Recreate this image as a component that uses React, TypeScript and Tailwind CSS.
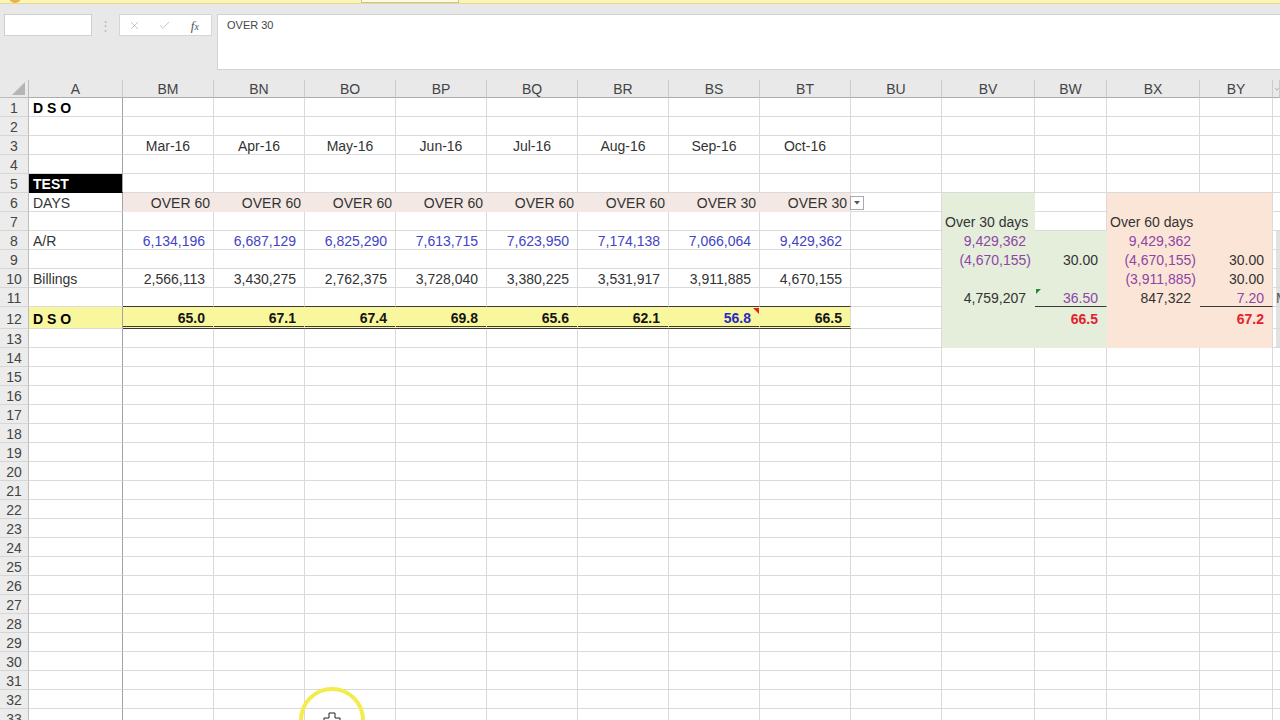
import clsx from 'clsx';
import { X, Check } from 'lucide-react';

type Col = { key: string; w: string };
type Cell = { t: string; a?: 'l' | 'l3' | 'r' | 'rp' | 'c'; c?: string };

const COLS: Col[] = [
  { key: 'A', w: 'w-[94px]' },
  { key: 'BM', w: 'w-[91px]' },
  { key: 'BN', w: 'w-[91px]' },
  { key: 'BO', w: 'w-[91px]' },
  { key: 'BP', w: 'w-[91px]' },
  { key: 'BQ', w: 'w-[91px]' },
  { key: 'BR', w: 'w-[91px]' },
  { key: 'BS', w: 'w-[91px]' },
  { key: 'BT', w: 'w-[91px]' },
  { key: 'BU', w: 'w-[91px]' },
  { key: 'BV', w: 'w-[93px]' },
  { key: 'BW', w: 'w-[72px]' },
  { key: 'BX', w: 'w-[93px]' },
  { key: 'BY', w: 'w-[73px]' },
  { key: 'Z', w: 'w-[7px]' },
];

const MAIN = ['BM', 'BN', 'BO', 'BP', 'BQ', 'BR', 'BS', 'BT'];
const ROWS = Array.from({ length: 33 }, (_, i) => i + 1);

const BLUE = 'text-[#4343c6]';
const PURPLE = 'text-[#8d46a6]';
const RED = 'text-[#e2222c] font-bold';

const ALIGN = {
  l: 'justify-start pl-[4px]',
  l3: 'justify-start pl-[3px]',
  r: 'justify-end pr-[8px]',
  rp: 'justify-end pr-[3px]',
  c: 'justify-center',
};

const months = ['Mar-16', 'Apr-16', 'May-16', 'Jun-16', 'Jul-16', 'Aug-16', 'Sep-16', 'Oct-16'];
const days = ['OVER 60', 'OVER 60', 'OVER 60', 'OVER 60', 'OVER 60', 'OVER 60', 'OVER 30', 'OVER 30'];
const ar = ['6,134,196', '6,687,129', '6,825,290', '7,613,715', '7,623,950', '7,174,138', '7,066,064', '9,429,362'];
const billings = ['2,566,113', '3,430,275', '2,762,375', '3,728,040', '3,380,225', '3,531,917', '3,911,885', '4,670,155'];
const dso = ['65.0', '67.1', '67.4', '69.8', '65.6', '62.1', '56.8', '66.5'];

const DATA: Record<string, Cell> = {
  A1: { t: 'D S O', a: 'l', c: 'font-bold text-black' },
  A5: { t: 'TEST', a: 'l', c: 'font-bold text-white' },
  A6: { t: 'DAYS', a: 'l' },
  A8: { t: 'A/R', a: 'l' },
  A10: { t: 'Billings', a: 'l' },
  A12: { t: 'D S O', a: 'l', c: 'font-bold text-black' },
  BV7: { t: 'Over 30 days', a: 'l3' },
  BV8: { t: '9,429,362', a: 'r', c: PURPLE },
  BV9: { t: '(4,670,155)', a: 'rp', c: PURPLE },
  BW9: { t: '30.00', a: 'r' },
  BV11: { t: '4,759,207', a: 'r' },
  BW11: { t: '36.50', a: 'r', c: PURPLE },
  BW12: { t: '66.5', a: 'r', c: RED },
  BX7: { t: 'Over 60 days', a: 'l3' },
  BX8: { t: '9,429,362', a: 'r', c: PURPLE },
  BX9: { t: '(4,670,155)', a: 'rp', c: PURPLE },
  BY9: { t: '30.00', a: 'r' },
  BX10: { t: '(3,911,885)', a: 'rp', c: PURPLE },
  BY10: { t: '30.00', a: 'r' },
  BX11: { t: '847,322', a: 'r' },
  BY11: { t: '7.20', a: 'r', c: PURPLE },
  BY12: { t: '67.2', a: 'r', c: RED },
};

MAIN.forEach((k, i) => {
  DATA[`${k}3`] = { t: months[i], a: 'c' };
  DATA[`${k}6`] = { t: days[i], a: 'rp' };
  DATA[`${k}8`] = { t: ar[i], a: 'r', c: BLUE };
  DATA[`${k}10`] = { t: billings[i], a: 'r' };
  DATA[`${k}12`] = {
    t: dso[i],
    a: 'r',
    c: k === 'BS' ? 'font-bold text-[#2b2bbf]' : 'font-bold text-[#151515]',
  };
});

function cellLook(col: string, row: number) {
  const main = MAIN.includes(col);
  let bg = '';
  let br = col === 'A' ? 'border-r-[#a3a3a3]' : 'border-r-[#dadada]';
  let bb = 'border-b-[#dadada]';
  let bw = 'border-b';

  if (col === 'A' && row === 5) {
    bg = 'bg-black';
    bb = 'border-b-black';
  }
  if (row === 6 && main) {
    bg = 'bg-[#f3e8e4]';
    bb = 'border-b-[#f3e8e4]';
    if (col !== 'BT') br = 'border-r-[#f3e8e4]';
  }
  if (row === 11 && main) bb = 'border-b-[#3a3a3a]';
  if (row === 12 && (main || col === 'A')) {
    bg = 'bg-[#f9f79d]';
    if (main) {
      bw = 'border-b-[3px] border-double';
      bb = 'border-b-[#3a3a3a]';
      if (col !== 'BT') br = 'border-r-[#f9f79d]';
    }
  }
  const green = (col === 'BV' && row >= 6 && row <= 13) || (col === 'BW' && row >= 8 && row <= 13);
  if (green) {
    bg = 'bg-[#e4eedb]';
    br = 'border-r-[#e4eedb]';
    bb = row === 11 && col === 'BW' ? 'border-b-[#3a3a3a]' : 'border-b-[#e4eedb]';
  }
  const orange = (col === 'BX' || col === 'BY') && row >= 6 && row <= 13;
  if (orange) {
    bg = 'bg-[#fbe5d7]';
    if (col === 'BX') br = 'border-r-[#fbe5d7]';
    bb = row === 11 && col === 'BY' ? 'border-b-[#3a3a3a]' : 'border-b-[#fbe5d7]';
  }
  if (col === 'Z') br = 'border-r-0';
  return clsx(bg, br, bb, bw);
}

function FormulaBar() {
  return (
    <div className="flex h-[76px] flex-col bg-[#e8e8e8] pt-[10px]">
      <div className="flex items-start">
        <div className="ml-[4px] h-[22px] w-[88px] border border-[#cfcfcf] bg-white" />
        <div className="flex h-[22px] w-[27px] items-center justify-center text-[13px] leading-none text-[#b8b8b8]">
          ⋮
        </div>
        <div className="flex h-[22px] w-[93px] items-center border border-[#d6d6d6] bg-white">
          <div className="flex w-[30px] justify-center text-[#b9b9b9]">
            <X size={13} strokeWidth={1.5} />
          </div>
          <div className="flex w-[30px] justify-center text-[#b9b9b9]">
            <Check size={13} strokeWidth={1.5} />
          </div>
          <div className="flex w-[33px] justify-center font-['Liberation_Serif',serif] text-[13px] italic leading-none text-[#555]">
            f<span className="mt-[3px] text-[10px]">x</span>
          </div>
        </div>
        <div className="ml-[5px] h-[56px] flex-1 border-y border-l border-[#d2d2d2] bg-white px-[9px] pt-[3px] text-[11px] leading-[14px] text-[#444]">
          OVER 30
        </div>
      </div>
    </div>
  );
}

function HeaderRow() {
  return (
    <div className="flex h-[18px] bg-[#e9e9e9]">
      <div className="relative w-[29px] shrink-0 border-r border-b border-[#bcbcbc]">
        <svg className="absolute right-[3px] bottom-[2px]" width="13" height="13" viewBox="0 0 13 13">
          <polygon points="13,0 13,13 0,13" fill="#b5b5b5" />
        </svg>
      </div>
      {COLS.map((col) => (
        <div
          key={col.key}
          className={clsx(
            'flex shrink-0 items-center justify-center overflow-hidden border-b border-r border-b-[#acacac] border-r-[#cbcbcb] pt-[1px] text-[14px] leading-[16px] text-[#444]',
            col.w,
          )}
        >
          {col.key === 'Z' ? (
            <svg width="6" height="6" viewBox="0 0 6 6" className="ml-[2px]">
              <polyline points="0,1 3,5 6,1" fill="none" stroke="#9a9a9a" strokeWidth="1" />
            </svg>
          ) : (
            col.key
          )}
        </div>
      ))}
    </div>
  );
}

function Row({ row }: { row: number }) {
  return (
    <div className={clsx('flex', row === 12 ? 'h-[22px]' : 'h-[19px]')}>
      <div className="flex w-[29px] shrink-0 items-center justify-center border-r border-b border-r-[#bdbdbd] border-b-[#d6d6d6] bg-[#ececec] pt-[2px] text-[14px] leading-[16px] text-[#444]">
        {row}
      </div>
      {COLS.map((col) => {
        const cell = DATA[`${col.key}${row}`];
        return (
          <div
            key={col.key}
            className={clsx(
              'relative flex shrink-0 items-center overflow-hidden whitespace-nowrap pt-[2px] text-[14px] leading-[16px]',
              'border-r',
              col.w,
              cellLook(col.key, row),
              cell && ALIGN[cell.a ?? 'l'],
              cell?.c ?? 'text-[#333]',
            )}
          >
            {col.key === 'Z' && row >= 8 && row <= 13 && (
              <div className="absolute inset-y-0 left-[3px] right-0 bg-[#e2e2e2]" />
            )}
            {col.key === 'Z' && row === 11 && (
              <span className="relative pl-[3px] text-[#555]">M</span>
            )}
            {cell?.t}
          </div>
        );
      })}
    </div>
  );
}

export default function App() {
  return (
    <div className="relative h-[720px] w-[1280px] overflow-hidden bg-white font-['Liberation_Sans',Arial,sans-serif]">
      {/* message strip */}
      <div className="relative h-[4px] overflow-hidden border-b border-[#e3dc96] bg-[#fbf4b4]">
        <div className="absolute left-[9px] top-[-9px] h-[12px] w-[12px] rounded-full bg-[#e9b24a]" />
        <div className="absolute left-[361px] top-[-4px] h-[7px] w-[98px] border border-[#c9c39a] bg-[#fffbe0]" />
      </div>
      <FormulaBar />
      <HeaderRow />
      {ROWS.map((r) => (
        <Row key={r} row={r} />
      ))}

      {/* filter dropdown on BT6 */}
      <div className="absolute left-[850px] top-[196px] flex h-[14px] w-[14px] items-center justify-center border border-[#a9a9a9] bg-white">
        <svg width="6" height="4" viewBox="0 0 6 4">
          <polygon points="0,0 6,0 3,3.5" fill="#555" />
        </svg>
      </div>

      {/* error / comment indicators */}
      <svg className="absolute left-[753px] top-[308px]" width="6" height="6" viewBox="0 0 6 6">
        <polygon points="0,0 6,0 6,6" fill="#e3242b" />
      </svg>
      <svg className="absolute left-[1036px] top-[289px]" width="5" height="5" viewBox="0 0 5 5">
        <polygon points="0,0 5,0 0,5" fill="#1f8a3a" />
      </svg>

      {/* screen-recorder cursor highlight */}
      <svg className="absolute left-[297px] top-[685px]" width="70" height="70" viewBox="0 0 70 70">
        <circle cx="35" cy="35" r="31" fill="none" stroke="#f3ec4c" strokeWidth="4" />
        <path d="M32 28 h6 v5 h5 v6 h-5 v5 h-6 v-5 h-5 v-6 h5 z" fill="#fff" stroke="#222" strokeWidth="1" />
      </svg>
    </div>
  );
}
